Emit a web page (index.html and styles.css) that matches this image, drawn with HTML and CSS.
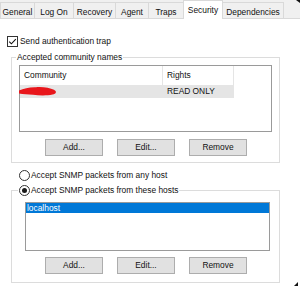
FILE: index.html
```html
<html>
  <head>
    <meta charset="utf-8" />
    <title>SNMP Service Properties</title>
    <link rel="stylesheet" href="styles.css">
  </head>

  <body>
    <div class="tabs">
      <div class="tab tab-general">General</div>
      <div class="tab tab-logon">Log On</div>
      <div class="tab tab-recovery">Recovery</div>
      <div class="tab tab-agent">Agent</div>
      <div class="tab tab-traps">Traps</div>
      <div class="tab tab-security tab-active">Security</div>
      <div class="tab tab-deps">Dependencies</div>
    </div>

    <div class="page">
      <div class="check-row">
        <svg class="checkbox" width="11" height="11" viewBox="0 0 11 11">
          <rect x="0.5" y="0.5" width="10" height="10" fill="#fff" stroke="#333" />
          <path d="M2.2 5.6 L4.4 7.8 L8.8 3.2" fill="none" stroke="#111" stroke-width="1.1" />
        </svg>
        Send authentication trap
      </div>

      <fieldset class="group">
        <legend class="group-title">Accepted community names</legend>
        <div class="list list-community">
          <div class="list-head">
            <div class="col col-name">Community</div>
            <div class="col col-rights">Rights</div>
          </div>
          <div class="list-row">
            <div class="col col-name">
              <!-- name scribbled out in red -->
              <svg class="scribble" width="40" height="13" viewBox="0 0 40 13">
                <path d="M0 5.5 C5 3.5 10 2 17 2.2 C24 1.6 31 3 35 4.8 C38 6.4 37.5 9 33.5 9.6 C28 10.8 20 10.6 14 9.8 C9 9.4 4 9 0 8.4 Z" fill="#e8161b" />
              </svg>
            </div>
            <div class="col col-rights">READ ONLY</div>
          </div>
        </div>
        <div class="buttons">
          <div class="btn">Add...</div>
          <div class="btn">Edit...</div>
          <div class="btn">Remove</div>
        </div>
      </fieldset>

      <div class="radio-row">
        <span class="radio"></span>
        Accept SNMP packets from any host
      </div>

      <fieldset class="group group-hosts">
        <legend class="radio-legend">
          <span class="radio radio-on"></span>
          Accept SNMP packets from these hosts
        </legend>
        <div class="list list-hosts">
          <div class="host-row">localhost</div>
        </div>
        <div class="buttons buttons-hosts">
          <div class="btn">Add...</div>
          <div class="btn">Edit...</div>
          <div class="btn">Remove</div>
        </div>
      </fieldset>
    </div>

    <div class="cursor cursor-top"></div>
    <div class="cursor cursor-bottom"></div>
  </body>
</html>
```

FILE: styles.css
```css
body {
    margin: 0;
    width: 300px;
    height: 287px;
    overflow: hidden;
    position: relative;
    background-color: #fff;
    font-family: "Liberation Sans", Arial, sans-serif;
    font-size: 8.4px;
    color: #111;
}

/* tab strip */
.tabs {
    display: flex;
    align-items: flex-end;
    height: 18px;
    background-color: #f0f0f0;
    border-bottom: 1px solid #d9d9d9;
}
.tab {
    box-sizing: border-box;
    height: 16px;
    padding-top: 4px;
    line-height: 10px;
    text-align: center;
    border-top: 1px solid #d9d9d9;
    border-left: 1px solid #d9d9d9;
    background-color: #f0f0f0;
    white-space: nowrap;
}
.tab-general { width: 34px; }
.tab-logon { width: 39px; }
.tab-recovery { width: 42px; }
.tab-agent { width: 33px; }
.tab-traps { width: 35px; }
.tab-security { width: 40px; }
.tab-deps {
    width: 61px;
    border-right: 1px solid #d9d9d9;
}
.tab-active {
    height: 19px;
    margin-bottom: -1px;
    padding-top: 4px;
    background-color: #fff;
    border-right: 1px solid #d9d9d9;
    position: relative;
}
.tab-active + .tab {
    border-left: none;
}

/* page body */
.check-row {
    display: flex;
    align-items: center;
    gap: 2px;
    height: 12px;
    margin: 16px 0 0 7px;
}
.checkbox {
    display: block;
}

.group {
    box-sizing: border-box;
    width: 269px;
    margin: 5px 0 0 11px;
    padding: 0;
    border: 1px solid #dcdcdc;
    min-inline-size: 0;
}
.group-title {
    margin-left: 4px;
    padding: 0 1px;
    line-height: 10px;
}

.list {
    box-sizing: border-box;
    border: 1px solid #9a9a9a;
    background-color: #fff;
}
.list-community {
    width: 253px;
    height: 67px;
    margin: 3px 0 0 7px;
}
.list-head {
    display: flex;
    height: 19px;
    line-height: 19px;
}
.list-row {
    display: flex;
    width: 214px;
    height: 13px;
    line-height: 13px;
    background-color: #e5e5e5;
}
.col {
    box-sizing: border-box;
    padding-left: 4px;
    white-space: nowrap;
}
.list-head .col {
    border-right: 1px solid #e5e5e5;
}
.col-name {
    width: 143px;
}
.col-rights {
    width: 71px;
}
.list-row .col-name {
    padding-left: 0;
}
.scribble {
    display: block;
    margin-left: -1px;
}

.buttons {
    display: flex;
    margin: 7px 0 6px 33px;
}
.btn {
    box-sizing: border-box;
    width: 58px;
    height: 17px;
    line-height: 15px;
    text-align: center;
    background-color: #e1e1e1;
    border: 1px solid #adadad;
}
.btn + .btn {
    margin-left: 14px;
}

.radio-row {
    display: flex;
    align-items: center;
    gap: 1px;
    height: 12px;
    margin: 6px 0 0 19px;
}
.radio {
    box-sizing: border-box;
    width: 11px;
    height: 11px;
    border: 1px solid #333;
    border-radius: 50%;
    background-color: #fff;
    display: flex;
    justify-content: center;
    align-items: center;
}
.radio-on::after {
    content: "";
    width: 5px;
    height: 5px;
    border-radius: 50%;
    background-color: #1a1a1a;
}

.group-hosts {
    margin-top: 4px;
}
.radio-legend {
    display: flex;
    align-items: center;
    gap: 1px;
    margin-left: 6px;
    padding: 0 1px;
    line-height: 11px;
}
.list-hosts {
    width: 245px;
    height: 49px;
    margin: 6px 0 0 13px;
}
.host-row {
    height: 10px;
    line-height: 10px;
    padding-left: 1px;
    background-color: #0078d7;
    color: #fff;
}
.buttons-hosts {
    margin-top: 6px;
    margin-bottom: 8px;
}

/* bits of the mouse pointer caught in the capture */
.cursor {
    position: absolute;
    width: 0;
    height: 0;
}
.cursor-top {
    top: 0;
    right: 0;
    border-top: 3px solid #111;
    border-left: 4px solid transparent;
}
.cursor-bottom {
    top: 282px;
    left: 294px;
    border-bottom: 4px solid #111;
    border-left: 4px solid transparent;
}
```
